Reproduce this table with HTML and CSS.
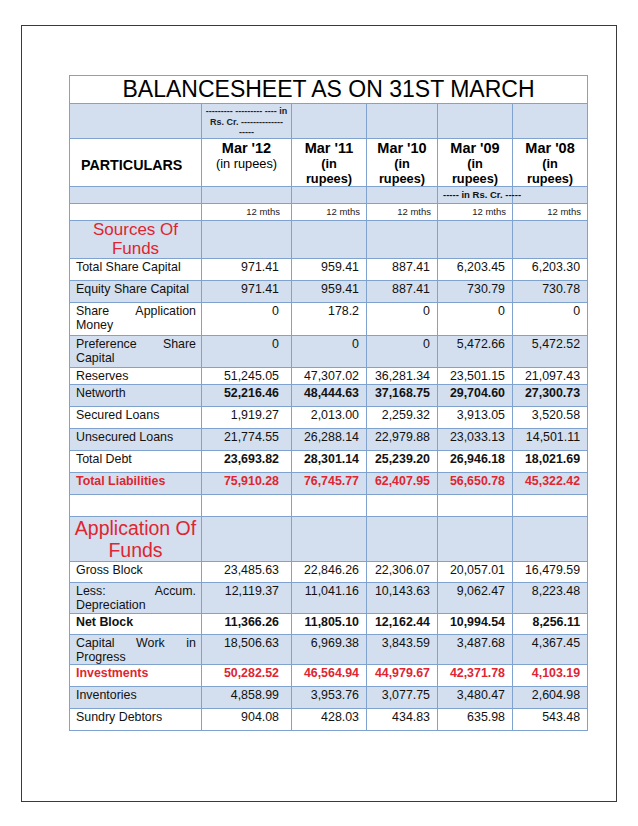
FILE: index.html
```html
<!DOCTYPE html>
<html>
<head>
<meta charset="utf-8">
<link rel="stylesheet" href="styles.css">
</head>
<body>
<div class="page">
<table class="sheet">
<colgroup>
<col class="c-part"><col class="c-12"><col class="c-11"><col class="c-10"><col class="c-09"><col class="c-08">
</colgroup>
<tr class="r-title"><td colspan="6" class="title">BALANCESHEET AS ON 31ST MARCH</td></tr>
<tr class="r-unit blue"><td></td><td class="unit">--------- --------- ---- in<br>Rs. Cr. --------------<br>-----</td><td></td><td></td><td></td><td></td></tr>
<tr class="r-head">
<td class="part-head">PARTICULARS</td>
<td class="yr"><b>Mar '12</b><br><span class="rs">(in rupees)</span></td>
<td class="yr"><b>Mar '11</b><br><b class="rs">(in<br>rupees)</b></td>
<td class="yr"><b>Mar '10</b><br><b class="rs">(in<br>rupees)</b></td>
<td class="yr"><b>Mar '09</b><br><b class="rs">(in<br>rupees)</b></td>
<td class="yr"><b>Mar '08</b><br><b class="rs">(in<br>rupees)</b></td>
</tr>
<tr class="r-thin blue"><td></td><td></td><td></td><td></td><td class="cr">----- in Rs. Cr. -----</td><td></td></tr>
<tr class="r-mths"><td></td><td class="m m1">12 mths</td><td class="m">12 mths</td><td class="m">12 mths</td><td class="m">12 mths</td><td class="m">12 mths</td></tr>
<tr class="r-src blue"><td class="sec src">Sources Of Funds</td><td></td><td></td><td></td><td></td><td></td></tr>
<tr class="r1"><td class="lbl">Total Share Capital</td><td class="n n1">971.41</td><td class="n">959.41</td><td class="n">887.41</td><td class="n">6,203.45</td><td class="n">6,203.30</td></tr>
<tr class="r1 blue"><td class="lbl">Equity Share Capital</td><td class="n n1">971.41</td><td class="n">959.41</td><td class="n">887.41</td><td class="n">730.79</td><td class="n">730.78</td></tr>
<tr class="r2a"><td class="lbl">Share Application Money</td><td class="n n1">0</td><td class="n">178.2</td><td class="n">0</td><td class="n">0</td><td class="n">0</td></tr>
<tr class="r2 blue"><td class="lbl">Preference Share Capital</td><td class="n n1">0</td><td class="n">0</td><td class="n">0</td><td class="n">5,472.66</td><td class="n">5,472.52</td></tr>
<tr class="r-short"><td class="lbl">Reserves</td><td class="n n1">51,245.05</td><td class="n">47,307.02</td><td class="n">36,281.34</td><td class="n">23,501.15</td><td class="n">21,097.43</td></tr>
<tr class="r1 blue"><td class="lbl">Networth</td><td class="n n1 b">52,216.46</td><td class="n b">48,444.63</td><td class="n b">37,168.75</td><td class="n b">29,704.60</td><td class="n b">27,300.73</td></tr>
<tr class="r1"><td class="lbl">Secured Loans</td><td class="n n1">1,919.27</td><td class="n">2,013.00</td><td class="n">2,259.32</td><td class="n">3,913.05</td><td class="n">3,520.58</td></tr>
<tr class="r1 blue"><td class="lbl">Unsecured Loans</td><td class="n n1">21,774.55</td><td class="n">26,288.14</td><td class="n">22,979.88</td><td class="n">23,033.13</td><td class="n">14,501.11</td></tr>
<tr class="r1"><td class="lbl">Total Debt</td><td class="n n1 b">23,693.82</td><td class="n b">28,301.14</td><td class="n b">25,239.20</td><td class="n b">26,946.18</td><td class="n b">18,021.69</td></tr>
<tr class="r1 blue red"><td class="lbl b">Total Liabilities</td><td class="n n1 b">75,910.28</td><td class="n b">76,745.77</td><td class="n b">62,407.95</td><td class="n b">56,650.78</td><td class="n b">45,322.42</td></tr>
<tr class="r1"><td></td><td></td><td></td><td></td><td></td><td></td></tr>
<tr class="r-app blue"><td class="sec app">Application Of Funds</td><td></td><td></td><td></td><td></td><td></td></tr>
<tr class="r1s"><td class="lbl">Gross Block</td><td class="n n1">23,485.63</td><td class="n">22,846.26</td><td class="n">22,306.07</td><td class="n">20,057.01</td><td class="n">16,479.59</td></tr>
<tr class="r2b blue"><td class="lbl">Less: Accum. Depreciation</td><td class="n n1">12,119.37</td><td class="n">11,041.16</td><td class="n">10,143.63</td><td class="n">9,062.47</td><td class="n">8,223.48</td></tr>
<tr class="r1s"><td class="lbl b">Net Block</td><td class="n n1 b">11,366.26</td><td class="n b">11,805.10</td><td class="n b">12,162.44</td><td class="n b">10,994.54</td><td class="n b">8,256.11</td></tr>
<tr class="r2c blue"><td class="lbl">Capital Work in Progress</td><td class="n n1">18,506.63</td><td class="n">6,969.38</td><td class="n">3,843.59</td><td class="n">3,487.68</td><td class="n">4,367.45</td></tr>
<tr class="r1 red"><td class="lbl b">Investments</td><td class="n n1 b">50,282.52</td><td class="n b">46,564.94</td><td class="n b">44,979.67</td><td class="n b">42,371.78</td><td class="n b">4,103.19</td></tr>
<tr class="r1 blue"><td class="lbl">Inventories</td><td class="n n1">4,858.99</td><td class="n">3,953.76</td><td class="n">3,077.75</td><td class="n">3,480.47</td><td class="n">2,604.98</td></tr>
<tr class="r1"><td class="lbl">Sundry Debtors</td><td class="n n1">904.08</td><td class="n">428.03</td><td class="n">434.83</td><td class="n">635.98</td><td class="n">543.48</td></tr>
</table>
</div>
</body>
</html>
```
FILE: styles.css
```css
html, body {
  margin: 0;
  padding: 0;
  background: #ffffff;
}
body {
  font-family: "Liberation Sans", Arial, sans-serif;
  color: #111;
}
.page {
  box-sizing: border-box;
  margin: 25px 0 0 21px;
  width: 596px;
  height: 777px;
  border: 1px solid #3a3a3a;
  padding: 49px 0 0 47px;
}
.sheet {
  border-collapse: collapse;
  table-layout: fixed;
  width: 518px;
  border: 1px solid #6f95c8;
}
.c-part { width: 132px; }
.c-12 { width: 90px; }
.c-11 { width: 75px; }
.c-10 { width: 71px; }
.c-09 { width: 75px; }
.c-08 { width: 75px; }
.sheet td {
  border: 1px solid #7fa2cf;
  padding: 1px 6px 0 6px;
  vertical-align: top;
  font-size: 12.4px;
  line-height: 14px;
  box-sizing: border-box;
}
.blue td { background: #d3dfee; }
.r-title td { height: 28px; }
.r-unit td { height: 35px; }
.r-head td { height: 48px; }
.r-thin td { height: 17px; }
.r-mths td { height: 17px; }
.r-src td { height: 38px; }
.r1 td { height: 22px; }
.r1s td { height: 21px; }
.r2a td { height: 33px; }
.r2 td { height: 32px; }
.r2b td { height: 31px; }
.r2c td { height: 30px; }
.r-short td { height: 17px; }
.r-app td { height: 45px; }
.sheet td.title {
  text-align: center;
  font-size: 23px;
  line-height: 27px;
  padding: 0;
  vertical-align: middle;
  color: #000;
}
.sheet td.unit {
  text-align: center;
  font-size: 9px;
  font-weight: bold;
  line-height: 10.5px;
  padding: 2px 2px 0 2px;
  color: #222;
}
.sheet td.part-head {
  font-weight: bold;
  font-size: 14.3px;
  vertical-align: middle;
  padding: 4px 6px 0 11px;
  color: #000;
}
.sheet td.yr {
  text-align: center;
  font-size: 14.5px;
  line-height: 15px;
  padding: 2px 3px 0 3px;
  color: #000;
}
.yr .rs {
  font-size: 12.8px;
}
.sheet td.cr {
  font-size: 9.5px;
  font-weight: bold;
  white-space: nowrap;
  overflow: visible;
  padding: 2px 0 0 5px;
  line-height: 11px;
}
.sheet td.m {
  text-align: right;
  font-size: 9.5px;
  line-height: 12px;
  padding: 2px 6px 0 0;
  color: #222;
}
.sheet td.m1 { padding-right: 11px; }
.sheet td.lbl {
  text-align: justify;
  padding-left: 6px;
  padding-right: 5px;
}
.sheet td.n {
  text-align: right;
  padding-right: 7px;
}
.sheet td.n1 { padding-right: 12px; }
.sheet td.b { font-weight: bold; }
.red td { color: #df2531; }
.sheet td.sec {
  text-align: center;
  color: #df2531;
  padding: 0 4px;
}
.sheet td.src {
  font-size: 17px;
  line-height: 18.5px;
  padding-top: 0;
}
.sheet td.app {
  font-size: 19.5px;
  line-height: 21.5px;
  padding-top: 1px;
}
```
